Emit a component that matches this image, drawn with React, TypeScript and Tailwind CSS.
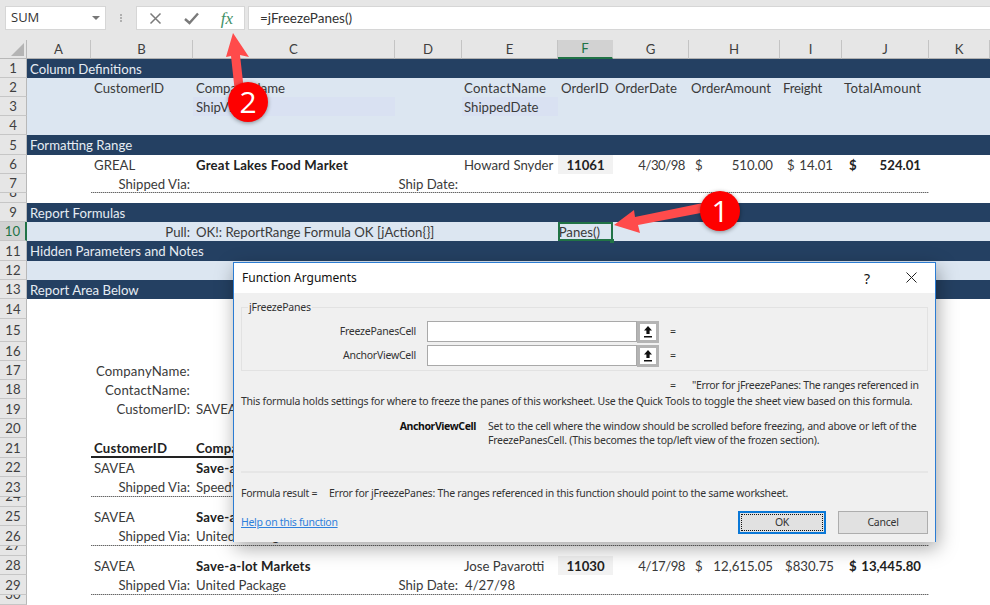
import React from "react";

const G = "grid grid-cols-[27px_64px_102px_202px_67px_96px_55px_76px_91px_62px_87px_61px]";

function Row({ n, h, bg = "bg-white", sel, children }: { n: number; h: string; bg?: string; sel?: boolean; children?: React.ReactNode }) {
  const tiny = h === "h-[10px]";
  return (
    <div className={`${G} ${h} ${bg} overflow-hidden`}>
      <div className={`col-start-1 row-start-1 flex justify-center h-full leading-[15px] overflow-hidden border-b border-[#c6c6c6] ${tiny ? "items-end pb-[2px]" : "items-center pt-[1px]"} ${sel ? "bg-[#d2d2d2] text-[#217346] border-r-2 border-r-[#217346]" : "bg-[#e6e6e6] text-[#3f3f3f] border-r border-r-[#b8b8b8]"} text-[13.2px]`}>
        {n}
      </div>
      {children}
    </div>
  );
}

function Cell({ col, className = "", children }: { col: string; className?: string; children?: React.ReactNode }) {
  return <div className={`${col} row-start-1 h-full pt-[1px] leading-[15px] flex items-center whitespace-nowrap text-[13.2px] text-[#3a3a3a] ${className}`}>{children}</div>;
}

const Band = ({ n, text, h }: { n: number; text: string; h: string }) => (
  <Row n={n} h={h} bg="bg-[#244062]">
    <Cell col="col-start-2" className="pl-[3px] text-[#e6ecf3]">{text}</Cell>
  </Row>
);

const Rule = () => (
  <div className="col-start-3 col-end-12 row-start-1 self-end h-[1px] bg-[repeating-linear-gradient(90deg,#666_0,#666_1px,#c4c4c4_1px,#c4c4c4_2px)]" />
);

const Heads: [string, string, boolean?][] = [
  ["A", "w-[64px]"], ["B", "w-[102px]"], ["C", "w-[202px]"], ["D", "w-[67px]"], ["E", "w-[96px]"],
  ["F", "w-[55px]", true], ["G", "w-[76px]"], ["H", "w-[91px]"], ["I", "w-[62px]"], ["J", "w-[87px]"], ["K", "w-[61px]"],
];

function OrderRow({ n, n2, n3, name, via, order, shipDate }: any) {
  return (
    <>
      <Row n={n} h="h-[19px]">
        <Cell col="col-start-3" className="pl-[3px]">SAVEA</Cell>
        <Cell col="col-start-4" className="pl-[3px] font-bold text-[#222] tracking-[0.2px]">{name}</Cell>
        {order && (
          <>
            <Cell col="col-start-6" className="pl-[2px]">{order.contact}</Cell>
            <Cell col="col-start-7" className="justify-center font-bold bg-[#f2f2f2] text-[#222]">{order.id}</Cell>
            <Cell col="col-start-8" className="justify-end pr-[4px] tracking-[-0.5px]">{order.date}</Cell>
            <Cell col="col-start-9" className="justify-between pl-[6px] pr-[7px]"><span>$</span><span>{order.amt}</span></Cell>
            <Cell col="col-start-10" className="justify-end pr-[8px]">{order.fr}</Cell>
            <Cell col="col-start-11" className="justify-between pl-[7px] pr-[8px] font-bold text-[#222]"><span>$</span><span>{order.total}</span></Cell>
          </>
        )}
      </Row>
      <Row n={n2} h="h-[20px]">
        <Cell col="col-start-3" className="justify-end pr-[3px]">Shipped Via:</Cell>
        <Cell col="col-start-4" className="pl-[3px]">{via}</Cell>
        {shipDate && (
          <>
            <Cell col="col-start-5" className="justify-end pr-[4px]">Ship Date:</Cell>
            <Cell col="col-start-6" className="pl-[3px]">{shipDate}</Cell>
          </>
        )}
        <Rule />
      </Row>
      <Row n={n3} h="h-[10px]" />
    </>
  );
}

function RefBtn() {
  return (
    <div className="w-[22px] h-[22px] bg-white border-[3px] border-[#b4b4b4] flex items-center justify-center">
      <svg width="10" height="13" viewBox="0 0 10 13">
        <path d="M5 1 L9 5.5 H6.6 V9 H3.4 V5.5 H1 Z M1 11 H9 V12.4 H1 Z" fill="#111" />
      </svg>
    </div>
  );
}

function ArgRow({ label }: { label: string }) {
  return (
    <div className="flex items-center h-[21px]">
      <div className="w-[174px] text-right text-[#333]">{label}</div>
      <div className="ml-[11px] w-[210px] h-[21px] bg-white border border-[#a9a9a9]" />
      <RefBtn />
      <div className="ml-[11px] text-[#333]">=</div>
    </div>
  );
}

export default function App() {
  return (
    <div className="relative w-[990px] h-[605px] overflow-hidden bg-[#e6e6e6] font-['Lato',sans-serif]">
      {/* formula bar */}
      <div className="h-[40px] pt-[6px] pl-[5px] flex items-start">
        <div className="w-[101px] h-[24px] bg-white border border-[#d6d6d6] flex items-center justify-between pl-[5px] pr-[5px] text-[13px] text-[#333] font-['Open_Sans',sans-serif]">
          <span>SUM</span>
          <span className="w-0 h-0 border-l-[4px] border-r-[4px] border-t-[4px] border-l-transparent border-r-transparent border-t-[#777]" />
        </div>
        <div className="w-[30px] h-[24px] flex flex-col items-center justify-center gap-[1px]">
          <span className="w-[2px] h-[2px] bg-[#b0b0b0]" />
          <span className="w-[2px] h-[2px] bg-[#b0b0b0]" />
          <span className="w-[2px] h-[2px] bg-[#b0b0b0]" />
        </div>
        <div className="w-[109px] h-[24px] bg-white border border-[#d6d6d6] flex items-center">
          <div className="w-[36px] flex justify-center">
            <svg width="13" height="13" viewBox="0 0 13 13"><path d="M1.5 1.5 L11.5 11.5 M11.5 1.5 L1.5 11.5" stroke="#7a7a7a" strokeWidth="1.5" /></svg>
          </div>
          <div className="w-[37px] flex justify-center">
            <svg width="15" height="13" viewBox="0 0 15 13"><path d="M1 7 L5.5 11 L14 1.5" stroke="#7a7a7a" strokeWidth="2.4" fill="none" /></svg>
          </div>
          <div className="w-[34px] flex justify-center font-['Liberation_Serif',serif] italic text-[17px] text-[#3f9067] leading-none">fx</div>
        </div>
        <div className="ml-[3px] w-[742px] h-[24px] bg-white border-l border-y border-[#d6d6d6] flex items-center pl-[11px] text-[13.5px] text-[#333]">=jFreezePanes()</div>
      </div>
      {/* column heads */}
      <div className="flex h-[19px]">
        <div className="w-[27px] h-full bg-[#e6e6e6] border-b border-r border-[#b8b8b8] flex items-end justify-end pr-[2px] pb-[2px]">
          <svg width="13" height="13" viewBox="0 0 13 13"><path d="M13 0 V13 H0 Z" fill="#b4b4b4" /></svg>
        </div>
        {Heads.map(([t, w, sel]) => (
          <div key={t} className={`${w} h-full pt-[1px] flex items-center justify-center text-[13.2px] border-r ${sel ? "bg-[#d2d2d2] text-[#217346] border-b-2 border-b-[#217346] border-r-[#d2d2d2]" : "bg-[#e6e6e6] text-[#3f3f3f] border-b border-b-[#b0b0b0] border-r-[#c4c4c4]"}`}>
            {t}
          </div>
        ))}
      </div>
      {/* sheet */}
      <div className="bg-white">
        <Band n={1} text="Column Definitions" h="h-[19px]" />
        <Row n={2} h="h-[19px]" bg="bg-[#dce6f1]">
          <Cell col="col-start-3" className="pl-[3px]">CustomerID</Cell>
          <Cell col="col-start-4" className="pl-[3px]">CompanyName</Cell>
          <Cell col="col-start-6" className="pl-[2px] tracking-[0.2px]">ContactName</Cell>
          <Cell col="col-start-7" className="pl-[3px]">OrderID</Cell>
          <Cell col="col-start-8" className="pl-[2px]">OrderDate</Cell>
          <Cell col="col-start-9" className="pl-[2px]">OrderAmount</Cell>
          <Cell col="col-start-10" className="pl-[3px] tracking-[-0.2px]">Freight</Cell>
          <Cell col="col-start-11" className="pl-[2px] tracking-[0.25px]">TotalAmount</Cell>
        </Row>
        <Row n={3} h="h-[19px]" bg="bg-[#dce6f1]">
          <Cell col="col-start-4" className="pl-[3px] bg-[#d9e1f2]">ShipVia</Cell>
          <Cell col="col-start-6" className="pl-[2px] bg-[#d9e1f2]">ShippedDate</Cell>
        </Row>
        <Row n={4} h="h-[19px]" bg="bg-[#dce6f1]" />
        <Band n={5} text="Formatting Range" h="h-[20px]" />
        <Row n={6} h="h-[19px]">
          <Cell col="col-start-3" className="pl-[3px]">GREAL</Cell>
          <Cell col="col-start-4" className="pl-[3px] font-bold text-[#222] tracking-[0.2px]">Great Lakes Food Market</Cell>
          <Cell col="col-start-6" className="pl-[2px]">Howard Snyder</Cell>
          <Cell col="col-start-7" className="justify-center font-bold bg-[#f2f2f2] text-[#222]">11061</Cell>
          <Cell col="col-start-8" className="justify-end pr-[4px] tracking-[-0.5px]">4/30/98</Cell>
          <Cell col="col-start-9" className="justify-between pl-[6px] pr-[7px]"><span>$</span><span>510.00</span></Cell>
          <Cell col="col-start-10" className="justify-between pl-[7px] pr-[9px]"><span>$</span><span>14.01</span></Cell>
          <Cell col="col-start-11" className="justify-between pl-[7px] pr-[8px] font-bold text-[#222]"><span>$</span><span>524.01</span></Cell>
        </Row>
        <Row n={7} h="h-[19px]">
          <Cell col="col-start-3" className="justify-end pr-[3px]">Shipped Via:</Cell>
          <Cell col="col-start-5" className="justify-end pr-[4px]">Ship Date:</Cell>
          <Rule />
        </Row>
        <Row n={8} h="h-[10px]" />
        <Band n={9} text="Report Formulas" h="h-[19px]" />
        <Row n={10} h="h-[19px]" bg="bg-[#dce6f1]" sel>
          <Cell col="col-start-3" className="justify-end pr-[3px]">Pull:</Cell>
          <Cell col="col-start-4" className="pl-[3px]">OK!: ReportRange Formula OK [jAction{"{}"}]</Cell>
          <Cell col="col-start-7" className="justify-end pr-[11px] overflow-hidden border-2 border-[#217346]">=jFreezePanes()</Cell>
        </Row>
        <Band n={11} text="Hidden Parameters and Notes" h="h-[20px]" />
        <Row n={12} h="h-[19px]" bg="bg-[#dce6f1]" />
        <Band n={13} text="Report Area Below" h="h-[19px]" />
        <Row n={14} h="h-[20px]" />
        <Row n={15} h="h-[23px]" />
        <Row n={16} h="h-[19px]" />
        <Row n={17} h="h-[19px]"><Cell col="col-start-3" className="justify-end pr-[3px] tracking-[0.15px]">CompanyName:</Cell></Row>
        <Row n={18} h="h-[19px]"><Cell col="col-start-3" className="justify-end pr-[3px] tracking-[0.15px]">ContactName:</Cell></Row>
        <Row n={19} h="h-[20px]">
          <Cell col="col-start-3" className="justify-end pr-[3px]">CustomerID:</Cell>
          <Cell col="col-start-4" className="pl-[3px]">SAVEA</Cell>
        </Row>
        <Row n={20} h="h-[19px]" />
        <Row n={21} h="h-[20px]">
          <Cell col="col-start-3" className="pl-[3px] font-bold text-[#222] tracking-[0.2px]">CustomerID</Cell>
          <Cell col="col-start-4" className="pl-[3px] font-bold text-[#222] tracking-[0.2px]">CompanyName</Cell>
          <div className="col-start-3 col-end-12 row-start-1 self-end border-b-2 border-[#222]" />
        </Row>
        <OrderRow n={22} n2={23} n3={24} name="Save-a-lot Markets" via="Speedy Express" />
        <OrderRow n={25} n2={26} n3={27} name="Save-a-lot Markets" via="United Package" />
        <OrderRow
          n={28}
          n2={29}
          n3={30}
          name="Save-a-lot Markets"
          via="United Package"
          shipDate="4/27/98"
          order={{ contact: "Jose Pavarotti", id: "11030", date: "4/17/98", amt: "12,615.05", fr: "$830.75", total: "13,445.80" }}
        />
      </div>

      {/* fill handle of the selected cell */}
      <div className="absolute left-[610px] top-[239px] w-[4px] h-[4px] bg-[#217346]" />

      {/* dialog */}
      <div className="absolute left-[233px] top-[262px] w-[703px] h-[280px] flex flex-col bg-[#f0f0f0] border-x border-t border-[#2b7cd3] shadow-[2px_6px_18px_rgba(0,0,0,0.35)] font-['Noto_Sans',sans-serif] text-[#333]">
        <div className="h-[30px] bg-white flex items-center pl-[8px] text-[12px] text-[#111]">
          <span className="flex-1">Function Arguments</span>
          <span className="w-[12px] text-[14px] text-center mr-[33px]">?</span>
          <svg className="mr-[18px] mb-[2px]" width="11" height="11" viewBox="0 0 11 11"><path d="M0.5 0.5 L10.5 10.5 M10.5 0.5 L0.5 10.5" stroke="#222" strokeWidth="1" /></svg>
        </div>
        <div className="flex-1 px-[7px] pt-[14px] text-[10.5px] tracking-[-0.24px]">
          <div className="relative h-[64px] w-[687px] border border-[#e2e2e2] pt-[13px] flex flex-col gap-[3px]">
            <span className="absolute left-[6px] -top-[8px] bg-[#f0f0f0] px-[1px]">jFreezePanes</span>
            <ArgRow label="FreezePanesCell" />
            <ArgRow label="AnchorViewCell" />
          </div>
          <div className="h-[20px] flex items-end pl-[429px] whitespace-nowrap leading-none pb-[1px] tracking-[-0.32px]">
            <span className="w-[22px]">=</span>
            <span>"Error for jFreezePanes: The ranges referenced in</span>
          </div>
          <div className="mt-[2px] whitespace-nowrap h-[16px] leading-[16px]">This formula holds settings for where to freeze the panes of this worksheet. Use the Quick Tools to toggle the sheet view based on this formula.</div>
          <div className="mt-[10px] flex">
            <div className="w-[235px] text-right font-bold text-[#111] leading-[15px] tracking-[-0.4px]">AnchorViewCell</div>
            <div className="ml-[12px] w-[440px] leading-[14px] whitespace-nowrap">
              Set to the cell where the window should be scrolled before freezing, and above or left of the
              <br />
              FreezePanesCell. (This becomes the top/left view of the frozen section).
            </div>
          </div>
          <div className="mt-[24px] w-[687px] border-t-2 border-[#e6e6e6]" />
          <div className="mt-[12px] flex whitespace-nowrap leading-[16px] tracking-[-0.27px]">
            <span className="w-[88px]">Formula result =</span>
            <span>Error for jFreezePanes: The ranges referenced in this function should point to the same worksheet.</span>
          </div>
          <div className="mt-[10px] flex items-center justify-between w-[687px]">
            <span className="text-[#2f80dc] underline tracking-[-0.3px]">Help on this function</span>
            <div className="flex gap-[12px]">
              <div className="w-[88px] h-[23px] bg-[#e1e1e1] border-2 border-[#0a78d7] flex items-center justify-center outline-1 outline-dotted -outline-offset-4 outline-[#111]">OK</div>
              <div className="w-[90px] h-[23px] bg-[#e1e1e1] border border-[#adadad] flex items-center justify-center">Cancel</div>
            </div>
          </div>
        </div>
      </div>

      {/* callouts */}
      <svg className="absolute left-0 top-0 pointer-events-none" width="990" height="605" viewBox="0 0 990 605">
        <path d="M614 225 L634 210 L635 217 L703 203 L706 212 L638 225 L640 233 Z" fill="#ff4b4b" />
        <path d="M233 33 L249 57 L240 55 L245 100 L236 102 L231 56 L226 57 Z" fill="#ff4b4b" />
      </svg>
      <div className="absolute left-[700px] top-[191px] w-[40px] h-[40px] rounded-full bg-[#fe0000] shadow-[0_1px_4px_rgba(0,0,0,0.4)] flex items-center justify-center text-white text-[30px] font-['Open_Sans',sans-serif] leading-none">1</div>
      <div className="absolute left-[228px] top-[82px] w-[40px] h-[40px] rounded-full bg-[#fe0000] shadow-[0_1px_4px_rgba(0,0,0,0.4)] flex items-center justify-center text-white text-[30px] font-['Open_Sans',sans-serif] leading-none">2</div>
    </div>
  );
}
